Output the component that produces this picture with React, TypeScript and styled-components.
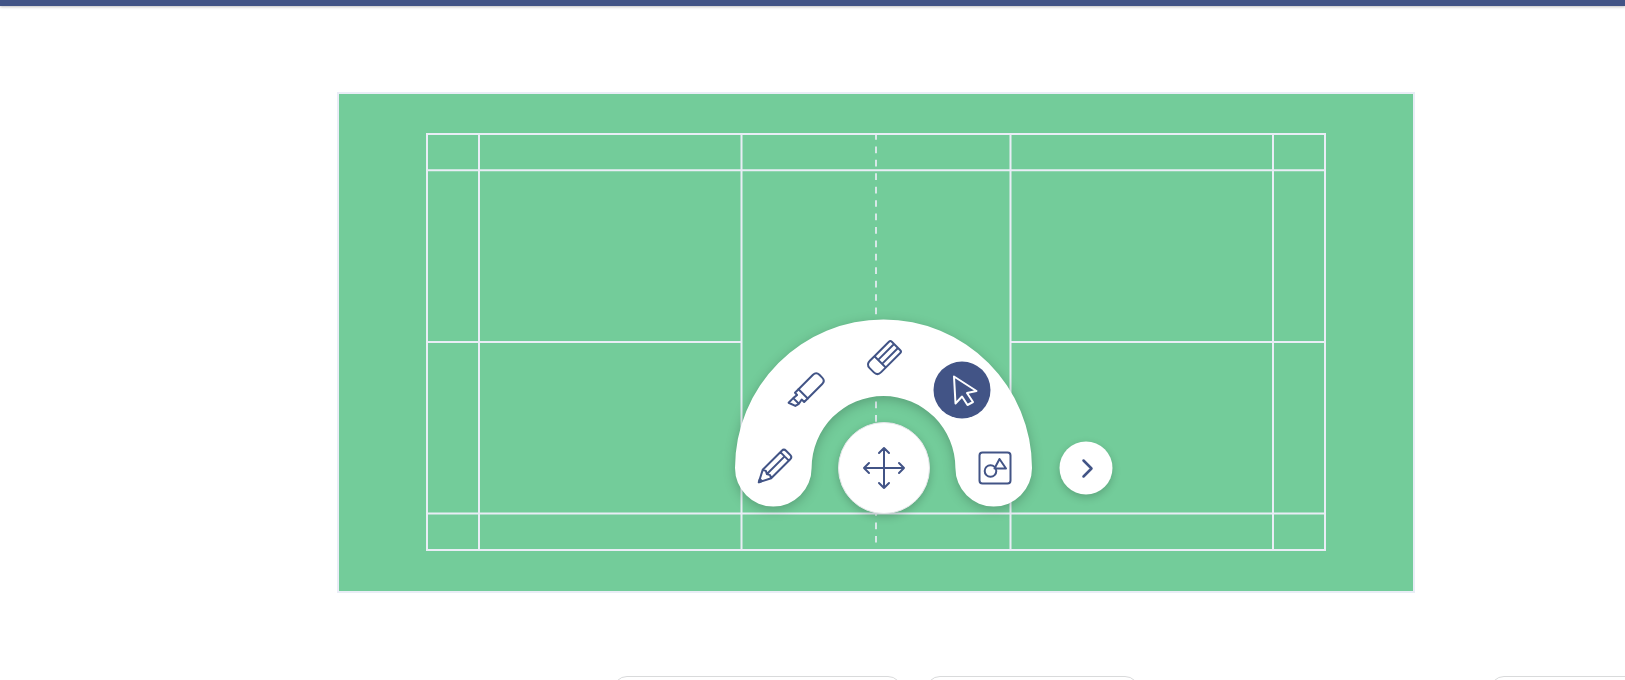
import React from 'react';
import styled, { createGlobalStyle } from 'styled-components';

const NAVY = '#425486';

const GlobalStyle = createGlobalStyle`
  *, *::before, *::after { box-sizing: border-box; }
  html, body { margin: 0; height: 100%; background: #fff; }
  body { font-family: Roboto, "Liberation Sans", sans-serif; overflow: hidden; }
  #root { height: 100%; }
`;

const Page = styled.div`
  display: flex;
  flex-direction: column;
  height: 100%;
`;

const TopBar = styled.header`
  flex: none;
  height: 6px;
  background: ${NAVY};
  box-shadow: 0 1px 3px rgba(0, 0, 0, 0.25);
`;

const Main = styled.main`
  display: grid;
  flex: none;
  padding: 86px 210px 83px 337px;
`;

const Board = styled.section`
  display: grid;
  border: 2px solid #e9edf6;
  background: #73cc9a;
  > * { grid-area: 1 / 1; }
`;

const CourtDrawing = styled.svg`
  display: block;
  width: 100%;
  height: auto;
`;

const Tools = styled.div`
  position: relative;
  align-self: end;
  justify-self: center;
  width: 297px;
  height: 188px;
  margin: 0 0 84px 15px;
`;

const Arch = styled.svg`
  position: absolute;
  inset: 0;
  overflow: visible;
  filter: drop-shadow(0 3px 6px rgba(0, 0, 0, 0.22));
`;

const RoundButton = styled.button<{ $x: number; $y: number; $size: number; $fill?: string; $raised?: boolean }>`
  position: absolute;
  left: ${p => p.$x}px;
  top: ${p => p.$y}px;
  width: ${p => p.$size}px;
  height: ${p => p.$size}px;
  transform: translate(-50%, -50%);
  display: grid;
  place-items: center;
  padding: 0;
  border: 0;
  border-radius: 50%;
  color: ${NAVY};
  background: ${p => p.$fill ?? 'transparent'};
  box-shadow: ${p => (p.$raised ? '0 3px 8px rgba(0, 0, 0, 0.2)' : 'none')};
  cursor: pointer;
`;

const HubButton = styled(RoundButton)`
  border: 1px solid #e3e6e8;
`;

const Glyph = styled.svg`
  display: block;
  overflow: visible;
  fill: none;
  stroke: currentColor;
  stroke-width: 2;
  stroke-linecap: round;
  stroke-linejoin: round;
`;

const PanelRow = styled.footer`
  display: flex;
  flex: 1;
  align-items: flex-start;
  min-height: 0;
  gap: 24px;
  padding-left: 613px;
  overflow: hidden;
`;

const Panel = styled.div<{ $width: number; $last?: boolean }>`
  flex: none;
  width: ${p => p.$width}px;
  height: 56px;
  margin-left: ${p => (p.$last ? 'auto' : '0')};
  margin-right: ${p => (p.$last ? '-100px' : '0')};
  border: 1px solid #d9dadb;
  border-radius: 14px;
  background: #fff;
`;

function Court() {
  return (
    <CourtDrawing viewBox="339 94 1074 497" role="img" aria-label="Badminton court">
      <g fill="none" stroke="#e9edf6" strokeWidth="2">
        <rect x="427" y="134" width="898" height="416" />
        <path d="M479 134V550M741.5 134V550M1010.5 134V550M1273 134V550" />
        <path d="M427 170.3H1325M427 513.6H1325M427 342H741M1011 342H1325" />
        <path d="M876 133V550" strokeWidth="1.7" strokeDasharray="6.7 6.73" />
      </g>
    </CourtDrawing>
  );
}

function Icon({ size = 34, children }: { size?: number; children: React.ReactNode }) {
  return (
    <Glyph width={size} height={size} viewBox={`0 0 ${size} ${size}`} aria-hidden="true">
      {children}
    </Glyph>
  );
}

function Toolbar() {
  return (
    <Tools role="toolbar" aria-label="Drawing tools">
      <Arch width="297" height="188" viewBox="0 0 297 188" aria-hidden="true">
        <path
          fill="#fff"
          d="M0 149A148.5 148.5 0 0 1 297 149A38.300 38.600 0 0 1 220.400 149A71.900 72 0 0 0 76.600 149A38.300 38.600 0 0 1 0 149Z"
        />
      </Arch>
      <RoundButton $x={39} $y={148} $size={56} aria-label="Pencil">
        <Icon>
          <g transform="translate(17 17) rotate(45)">
            <path d="M-6 10V-17Q-6 -20 -3 -20H3Q6 -20 6 -17V10L0 21.500ZM-6 -15H6M-6 10L-3 8.500L0 10L3 8.500L6 10M0 10V-15" />
            <path fill="currentColor" d="M-1.500 18.500H1.500L0 21.500Z" />
          </g>
        </Icon>
      </RoundButton>
      <RoundButton $x={72} $y={71} $size={56} aria-label="Highlighter">
        <Icon>
          <g transform="translate(17 17) rotate(45)">
            <path d="M-6.500 5.500V-15Q-6.500 -19.500 -2 -19.500H2Q6.500 -19.500 6.500 -15V5.500Z" />
            <path d="M-6.500 5.500V10.500H-3.500L-4 15.500V22L3 19.500L4 15.500L3 10.500H6.500V5.500M-4 15.500H4" />
          </g>
        </Icon>
      </RoundButton>
      <RoundButton $x={149} $y={39} $size={56} aria-label="Eraser">
        <Icon>
          <g transform="translate(17 17) rotate(45)">
            <path d="M-8 5.500V-15Q-8 -17 -6 -17H6Q8 -17 8 -15V12Q8 17.300 3 17.300H-3Q-8 17.300 -8 12ZM-8 5.500H8M-2.800 5.500V-17M2.800 5.500V-17" />
          </g>
        </Icon>
      </RoundButton>
      <RoundButton $x={227} $y={71} $size={57} $fill={NAVY} aria-label="Select" aria-pressed="true">
        <Icon>
          <path stroke="#fff" d="M8.500 3L31 17.500L21.500 19.500L27.500 28.500L22 31.500L16.500 23L10 30Z" />
        </Icon>
      </RoundButton>
      <RoundButton $x={260} $y={149} $size={56} aria-label="Shapes">
        <Icon>
          <rect x="1.500" y="1.500" width="31" height="31" rx="3" />
          <circle cx="12.500" cy="20" r="5.800" />
          <path d="M21.500 8L28 17.500H16.500Z" />
        </Icon>
      </RoundButton>
      <HubButton $x={149} $y={149} $size={92} $fill="#fff" $raised aria-label="Move toolbar">
        <Icon size={42}>
          <path d="M21 1V41M1 21H41M16 6L21 1L26 6M16 36L21 41L26 36M6 16L1 21L6 26M36 16L41 21L36 26" />
        </Icon>
      </HubButton>
      <RoundButton $x={351} $y={149} $size={53} $fill="#fff" $raised aria-label="Next">
        <Icon size={18}>
          <path strokeWidth="2.500" d="M6 1L14 9L6 17" />
        </Icon>
      </RoundButton>
    </Tools>
  );
}

export default function App() {
  return (
    <>
      <GlobalStyle />
      <Page>
        <TopBar />
        <Main>
          <Board aria-label="Tactics board">
            <Court />
            <Toolbar />
          </Board>
        </Main>
        <PanelRow>
          <Panel $width={289} />
          <Panel $width={213} />
          <Panel $width={235} $last />
        </PanelRow>
      </Page>
    </>
  );
}
